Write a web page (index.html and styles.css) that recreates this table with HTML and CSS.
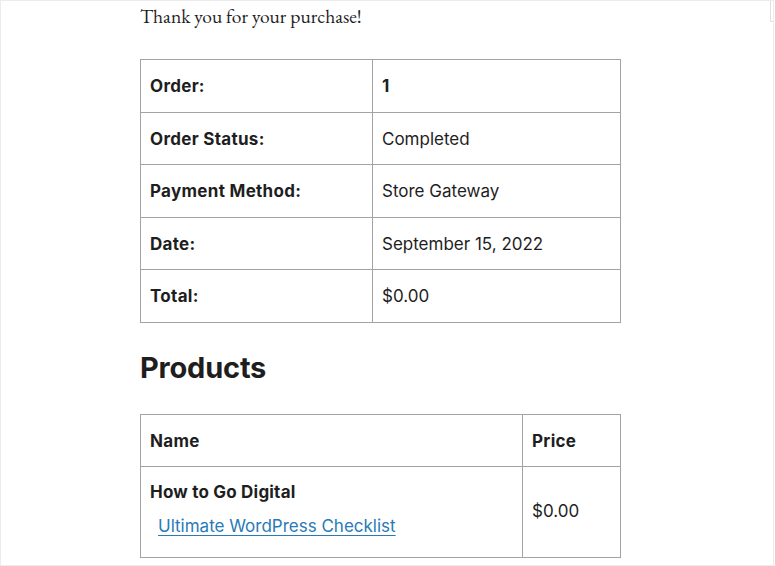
FILE: index.html
```html
<!DOCTYPE html>
<html>
<head>
<meta charset="utf-8">
<link rel="stylesheet" href="styles.css">
</head>
<body>
<div class="frame">
  <div class="scrollnub"></div>
  <div class="content">
    <p class="thanks">Thank you for your purchase!</p>
    <table class="info">
      <tr><th>Order:</th><td class="strong">1</td></tr>
      <tr><th>Order Status:</th><td>Completed</td></tr>
      <tr><th>Payment Method:</th><td>Store Gateway</td></tr>
      <tr><th>Date:</th><td>September 15, 2022</td></tr>
      <tr><th>Total:</th><td>$0.00</td></tr>
    </table>
    <h2 class="heading">Products</h2>
    <table class="products">
      <tr><th class="name-col">Name</th><th class="price-col">Price</th></tr>
      <tr>
        <td class="product-cell">
          <div class="product-name">How to Go Digital</div>
          <div class="product-link"><a href="#">Ultimate WordPress Checklist</a></div>
        </td>
        <td class="price-cell">$0.00</td>
      </tr>
    </table>
  </div>
</div>
</body>
</html>
```
FILE: styles.css
```css
html, body {
  margin: 0;
  padding: 0;
  background: #fff;
}
.frame {
  position: relative;
  box-sizing: border-box;
  width: 774px;
  height: 566px;
  border: 1px solid #ececec;
  overflow: hidden;
  font-family: Inter, "Liberation Sans", sans-serif;
  color: #1e1e1e;
}
.scrollnub {
  position: absolute;
  top: -1px;
  right: -1px;
  width: 3px;
  height: 21px;
  border-left: 1px solid #e0e0e0;
  border-bottom: 1px solid #e0e0e0;
}
.content {
  width: 481px;
  margin-left: 139px;
}
.thanks {
  font-family: "EB Garamond", "Liberation Serif", serif;
  font-size: 19.5px;
  line-height: 28px;
  margin: 0;
  padding-top: 1px;
  color: #1e1e1e;
}
table {
  border-collapse: collapse;
  width: 481px;
  font-size: 17px;
  line-height: 25.5px;
}
th, td {
  border: 1px solid #a3a3a3;
  padding: 14px 9px 12px;
  text-align: left;
  vertical-align: middle;
}
th { font-weight: 700; letter-spacing: 0.3px; }
.info { margin-top: 29px; }
.info th { width: 213px; }
.strong { font-weight: 700; }
.heading {
  font-size: 29px;
  font-weight: 700;
  line-height: 36px;
  margin: 27px 0 0 0;
  letter-spacing: -0.2px;
}
.products { margin-top: 28px; }
.products .price-col { width: 79px; }
.products td.product-cell { padding-top: 13px; padding-bottom: 18px; }
.products td.price-cell { padding-top: 14px; padding-bottom: 14px; }
.product-name { font-weight: 700; letter-spacing: 0.2px; }
.product-link { margin-top: 8px; padding-left: 8px; }
.product-link a { color: #2a7ab8; text-decoration: underline; text-underline-offset: 3px; }
```
